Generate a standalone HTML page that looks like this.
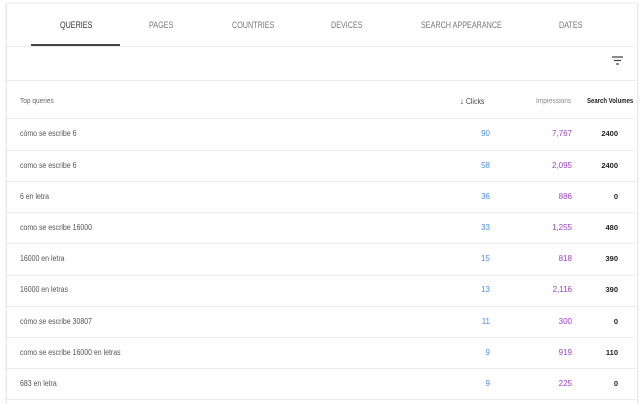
<!DOCTYPE html>
<html><head><style>
body{margin:0;width:640px;height:400px;background:#fff;font-family:"Liberation Sans",sans-serif;overflow:hidden;position:relative}
div{white-space:nowrap}
.card{position:absolute;left:6px;top:3px;width:630px;height:400px;border-left:1px solid #e6e6e6;border-right:1px solid #e6e6e6;border-top:1px solid #eee;box-shadow:0 0 3px rgba(0,0,0,.08)}
.tab{position:absolute;top:20px;font-size:9px;color:#777;transform:scaleX(.8);transform-origin:left}
.line{position:absolute;left:7px;width:629px;height:1px;background:#ebebeb}
.t{position:absolute;font-size:8px;color:#555;transform:scaleX(.87);transform-origin:left}
.c{position:absolute;font-size:8px;color:#4a90e2;text-align:right;width:60px;left:430px}
.i{position:absolute;font-size:8px;color:#a040c8;text-align:right;width:60px;left:512px}
.v{position:absolute;font-size:7.5px;color:#222;font-weight:bold;text-align:right;width:40px;left:578px}
</style></head><body>
<div class="card"></div>
<div class="tab" style="left:60px;color:#333">QUERIES</div>
<div style="position:absolute;left:31px;top:44px;width:89px;height:2px;background:#444"></div>
<div class="tab" style="left:149px">PAGES</div>
<div class="tab" style="left:232px">COUNTRIES</div>
<div class="tab" style="left:331px">DEVICES</div>
<div class="tab" style="left:421px">SEARCH APPEARANCE</div>
<div class="tab" style="left:559px">DATES</div>
<div class="line" style="top:46px"></div>
<svg style="position:absolute;left:612px;top:56px" width="11" height="9"><path d="M0 1h11M2 4.5h7M4 8h3" stroke="#444" stroke-width="1.2"/></svg>
<div class="line" style="top:80px"></div>
<div class="t" style="left:20px;top:96px;font-size:7.5px;color:#666">Top queries</div>
<div class="t" style="left:460px;top:96px;color:#444"><span style="font-size:9px">↓</span> Clicks</div>
<div class="t" style="left:536px;top:96px;color:#888;font-size:7.5px">Impressions</div>
<div class="t" style="left:587px;top:96px;color:#222;font-weight:bold;font-size:7.5px;transform:scaleX(.8)">Search Volumes</div>
<div class="line" style="top:118px"></div>
<div class="t" style="left:20px;top:129px">cómo se escribe 6</div><div class="c" style="top:129px">90</div><div class="i" style="top:129px">7,767</div><div class="v" style="top:129px">2400</div><div class="line" style="top:150px"></div>
<div class="t" style="left:20px;top:161px">como se escribe 6</div><div class="c" style="top:161px">58</div><div class="i" style="top:161px">2,095</div><div class="v" style="top:161px">2400</div><div class="line" style="top:181px"></div>
<div class="t" style="left:20px;top:192px">6 en letra</div><div class="c" style="top:192px">36</div><div class="i" style="top:192px">886</div><div class="v" style="top:192px">0</div><div class="line" style="top:212px"></div>
<div class="t" style="left:20px;top:223px">como se escribe 16000</div><div class="c" style="top:223px">33</div><div class="i" style="top:223px">1,255</div><div class="v" style="top:223px">480</div><div class="line" style="top:243px"></div>
<div class="t" style="left:20px;top:254px">16000 en letra</div><div class="c" style="top:254px">15</div><div class="i" style="top:254px">818</div><div class="v" style="top:254px">390</div><div class="line" style="top:275px"></div>
<div class="t" style="left:20px;top:285px">16000 en letras</div><div class="c" style="top:285px">13</div><div class="i" style="top:285px">2,116</div><div class="v" style="top:285px">390</div><div class="line" style="top:306px"></div>
<div class="t" style="left:20px;top:317px">cómo se escribe 30807</div><div class="c" style="top:317px">11</div><div class="i" style="top:317px">300</div><div class="v" style="top:317px">0</div><div class="line" style="top:337px"></div>
<div class="t" style="left:20px;top:348px">como se escribe 16000 en letras</div><div class="c" style="top:348px">9</div><div class="i" style="top:348px">919</div><div class="v" style="top:348px">110</div><div class="line" style="top:368px"></div>
<div class="t" style="left:20px;top:379px">683 en letra</div><div class="c" style="top:379px">9</div><div class="i" style="top:379px">225</div><div class="v" style="top:379px">0</div><div class="line" style="top:399px"></div>
</body></html>
